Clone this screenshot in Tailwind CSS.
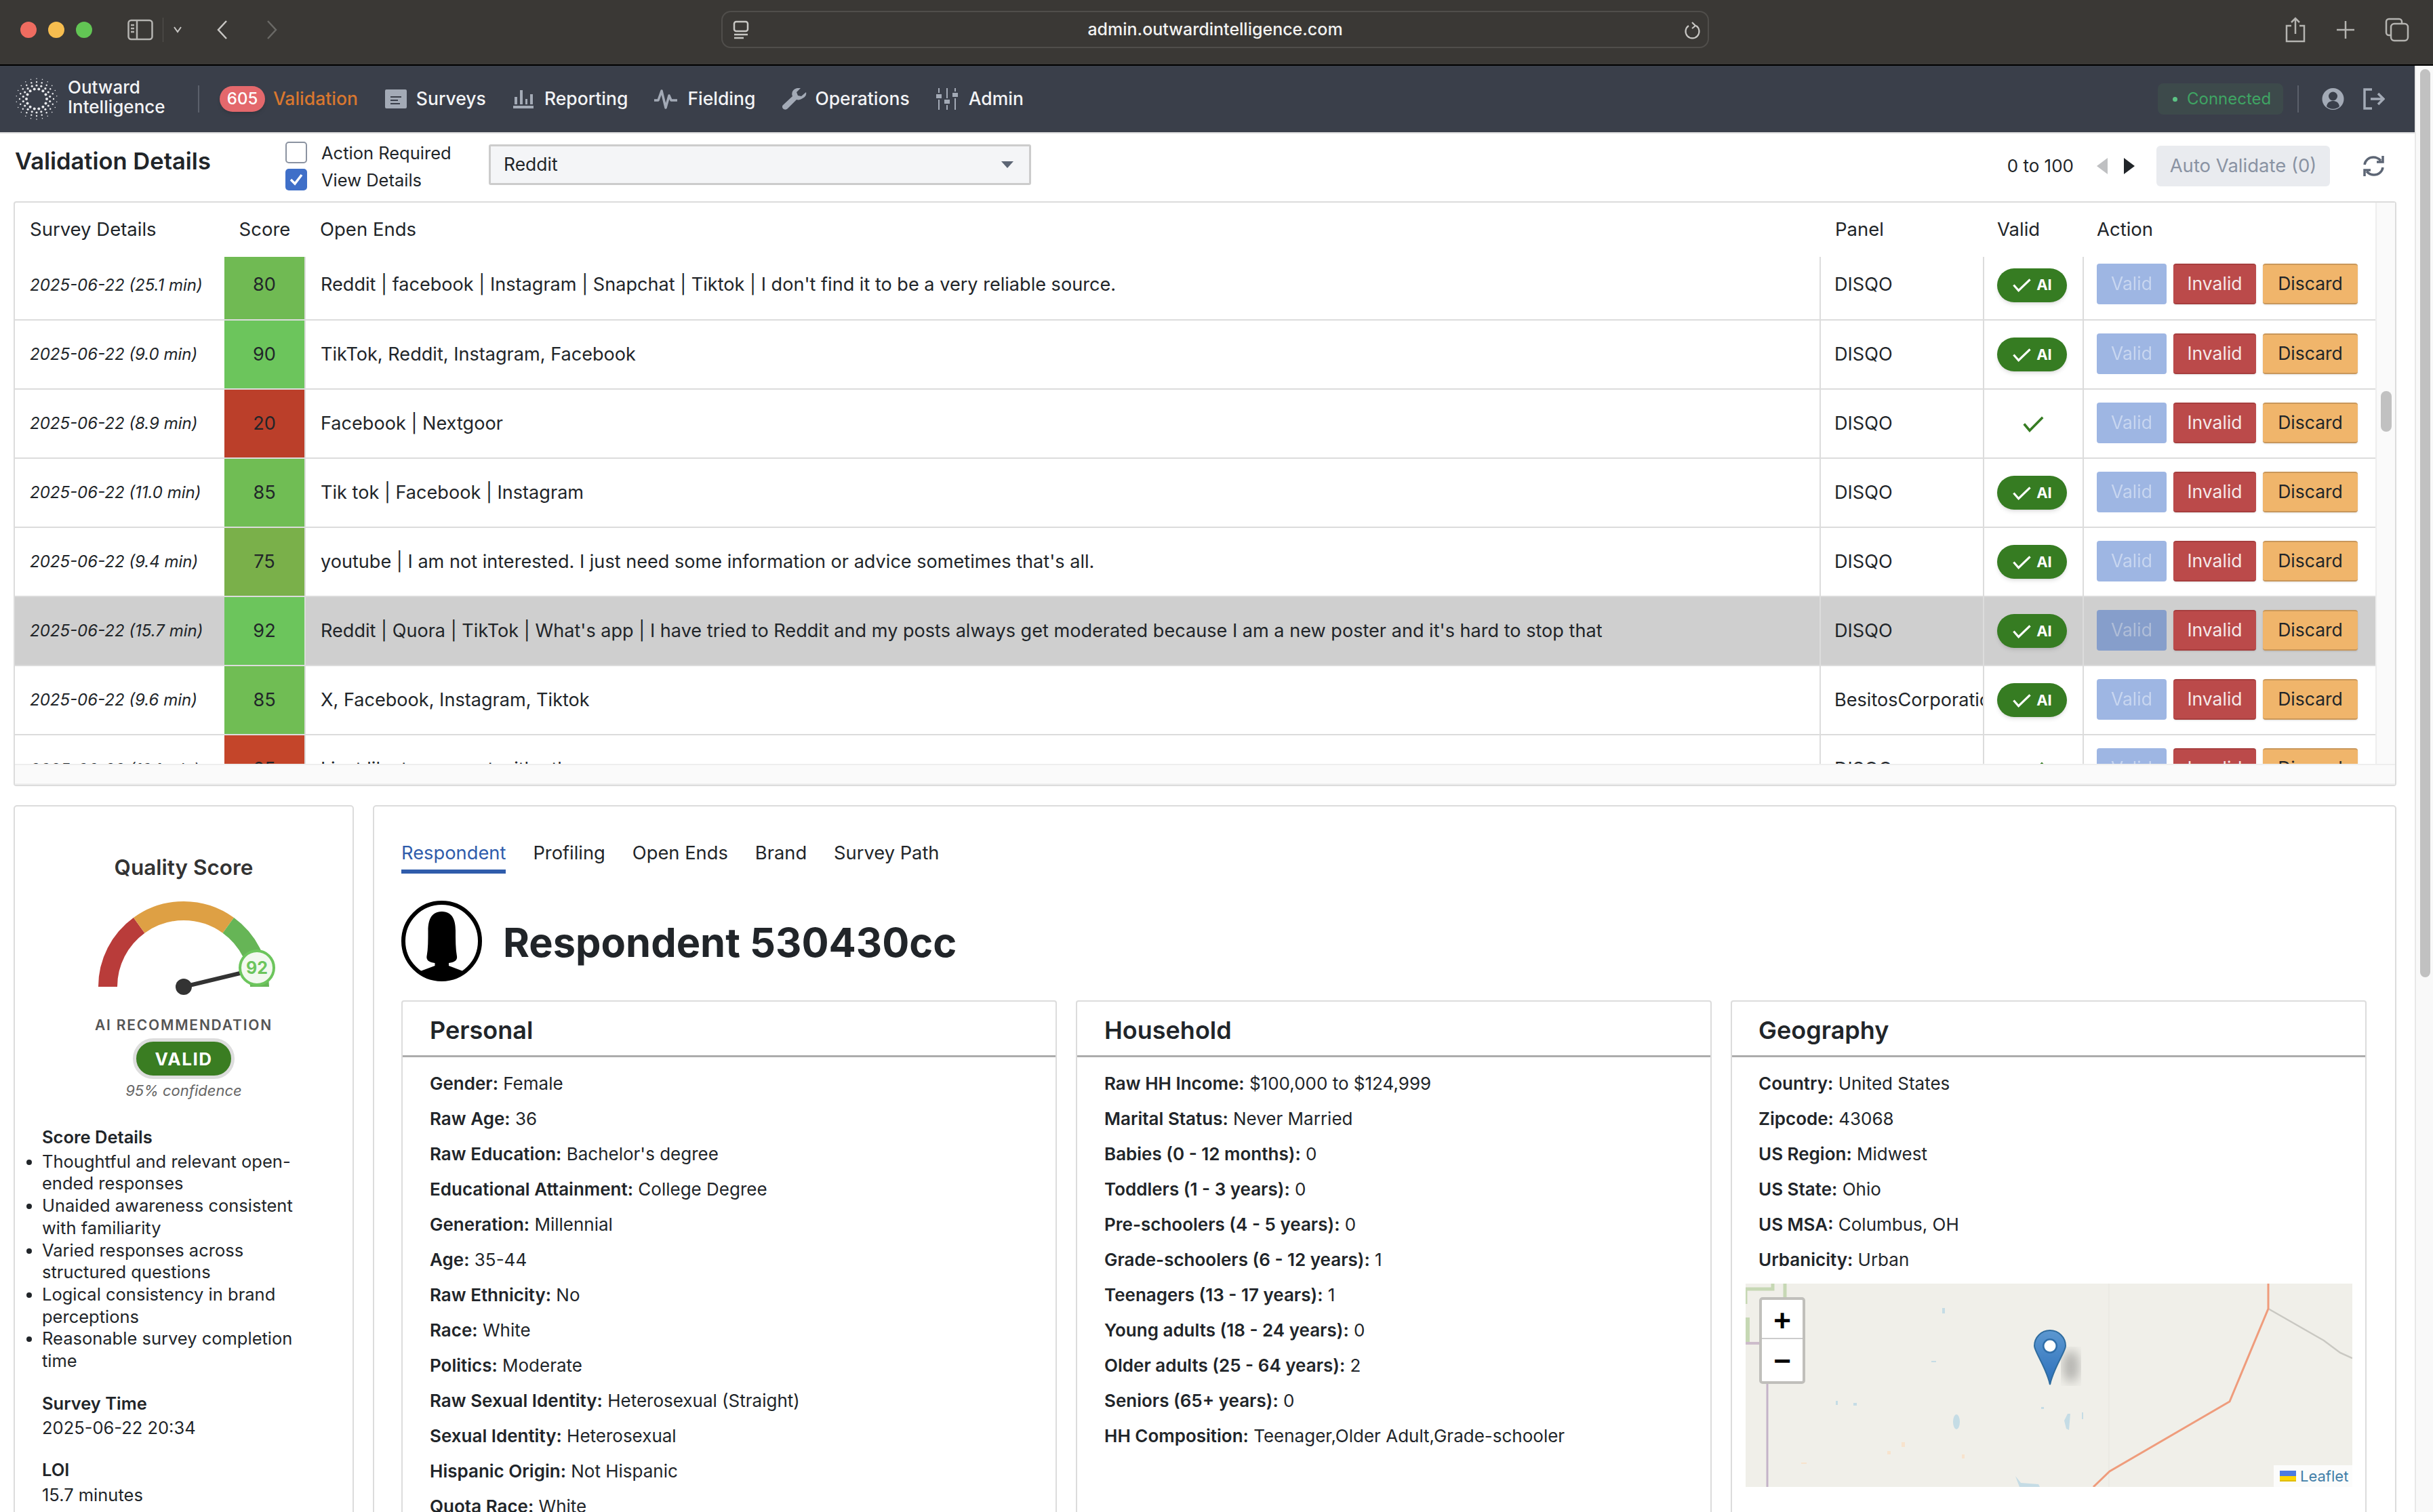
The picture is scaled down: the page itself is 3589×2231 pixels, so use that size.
<!DOCTYPE html>
<html lang="en">
  <head>
    <meta charset="UTF-8" />
    <title>Validation Details</title>
    <script src="https://cdn.jsdelivr.net/npm/@tailwindcss/browser@4"></script>
  </head>
  <body class="font-[Inter,sans-serif] text-[#212529] bg-white">
    <div class="h-[2231px] w-[3589px] overflow-hidden flex flex-col">
      <!-- safari chrome -->
      <div class="h-[97px] shrink-0 bg-[#3a3835] border-b-[2px] border-black relative flex items-center">
        <div class="flex gap-[17px] ml-[30px] mb-[8px]">
          <span class="w-[24px] h-[24px] rounded-full bg-[#ef6c60]"></span>
          <span class="w-[24px] h-[24px] rounded-full bg-[#f6bd4f]"></span>
          <span class="w-[24px] h-[24px] rounded-full bg-[#62c554]"></span>
        </div>
        <svg class="ml-[52px] mb-[8px]" width="38" height="32" viewBox="0 0 38 32" fill="none" stroke="#b5b4b1" stroke-width="2.5"><rect x="1.5" y="2" width="35" height="28" rx="4"/><path d="M14 2v28M5 9h5M5 14h5M5 19h5"/></svg>
        <span class="ml-[14px] mb-[8px] w-[1px] h-[36px] bg-[#55534f]"></span>
        <svg class="ml-[15px] mb-[8px]" width="12" height="10" viewBox="0 0 12 10" fill="none" stroke="#c8c7c4" stroke-width="2"><path d="M1 1l5 7 5-7"/></svg>
        <svg class="ml-[51px] mb-[8px]" width="18" height="30" viewBox="0 0 18 30" fill="none" stroke="#c8c7c4" stroke-width="2.5"><path d="M15 2L3 15l12 13"/></svg>
        <svg class="ml-[55px] mb-[8px]" width="18" height="30" viewBox="0 0 18 30" fill="none" stroke="#6a6966" stroke-width="2.5"><path d="M3 2l12 13L3 28"/></svg>
        <div class="ml-[654px] mb-[8px] w-[1457px] h-[55px] rounded-[14px] border-[2px] border-[#504e4b] flex items-center relative">
          <svg class="absolute left-[14px] top-[12px]" width="26" height="28" viewBox="0 0 26 28" fill="none" stroke="#c8c7c4" stroke-width="2.5"><rect x="3" y="2" width="20" height="14" rx="3"/><path d="M3 21h20M3 26h14"/></svg>
          <span class="w-full text-center text-[25px] font-medium text-[#f2f2f1]">admin.outwardintelligence.com</span>
          <svg class="absolute right-[10px] top-[13px]" width="26" height="30" viewBox="0 0 26 30" fill="none" stroke="#c8c7c4" stroke-width="2.2"><path d="M19 7a10 10 0 1 1-11 0M13 2l5 5-5 4"/></svg>
        </div>
        <svg class="ml-[850px] mb-[8px]" width="30" height="38" viewBox="0 0 30 38" fill="none" stroke="#b5b4b1" stroke-width="2.5"><path d="M9 13H2v23h26V13h-7M15 25V2M9 8l6-6 6 6"/></svg>
        <svg class="ml-[44px] mb-[8px]" width="30" height="30" viewBox="0 0 30 30" fill="none" stroke="#b5b4b1" stroke-width="2.5"><path d="M15 2v26M2 15h26"/></svg>
        <svg class="ml-[43px] mb-[8px]" width="36" height="36" viewBox="0 0 36 36" fill="none" stroke="#b5b4b1" stroke-width="2.5"><rect x="9" y="9" width="25" height="25" rx="5"/><path d="M9 26H6a4 4 0 0 1-4-4V6a4 4 0 0 1 4-4h15a4 4 0 0 1 4 4v3"/></svg>
      </div>

      <div class="flex flex-1 min-h-0">
        <div class="w-[3562px] flex flex-col min-h-0">
          <!-- app nav -->
          <nav class="h-[100px] shrink-0 bg-[#3a3f4a] border-b-[2px] border-[#dcdcdc] flex items-center text-[26.500px] font-medium text-[#f2f3f5]">
            <svg id="logo" class="ml-[21px]" width="66" height="66" viewBox="-33 -33 66 66" fill="#e8e9ec"></svg>
            <div class="ml-[13px] w-[192px] leading-[29px] text-[26px] pb-[6px]">Outward<br />Intelligence</div>
            <span class="w-[2px] h-[40px] bg-[#5b606b]"></span>
            <span class="ml-[30px] w-[67px] h-[38px] rounded-full bg-[#e4686c] text-white text-[24px] flex items-center justify-center shadow-md">605</span>
            <span class="ml-[12px] text-[#d9772f]">Validation</span>
            <svg class="ml-[40px]" width="32" height="28" viewBox="0 0 32 28" fill="#a3aab6"><path fill-rule="evenodd" d="M2 0h28a2 2 0 0 1 2 2v24a2 2 0 0 1-2 2H2a2 2 0 0 1-2-2V2a2 2 0 0 1 2-2zm6 10v2h16v-2H8zm0 5v2h11v-2H8zm0 5v2h14v-2H8z"/></svg>
            <span class="ml-[14px]">Surveys</span>
            <svg class="ml-[39px]" width="32" height="30" viewBox="0 0 32 30" fill="#a3aab6"><path d="M1 25h30v4H1zM3 12h4v11H3zM11 2h4v21h-4zM19 15h3v8h-3zM26 8h4v15h-4z"/></svg>
            <span class="ml-[15px]">Reporting</span>
            <svg class="ml-[39px]" width="34" height="30" viewBox="0 0 34 30" fill="none" stroke="#a3aab6" stroke-width="3.5" stroke-linejoin="round"><path d="M0 17h6l5-14 6 25 5-18 3 7h9"/></svg>
            <span class="ml-[15px]">Fielding</span>
            <svg class="ml-[40px]" width="36" height="32" viewBox="0 0 36 32" fill="#a3aab6"><path d="M35 6l-7 6-5-1-2-5 6-6c-5-1-10 1-12 5-1 3-1 5 0 7L1 25c-2 2-1 5 1 6s4 1 6-1l13-13c3 1 6 0 9-2 4-2 6-5 5-9z"/></svg>
            <span class="ml-[12px]">Operations</span>
            <svg class="ml-[39px]" width="32" height="32" viewBox="0 0 32 32" fill="#a3aab6"><path d="M3 0h2v7H3zM3 17h2v15H3zM0 9h8v6H0zM15 0h2v15h-2zM15 25h2v7h-2zM12 17h8v6h-8zM27 0h2v5h-2zM27 15h2v17h-2zM24 7h8v6h-8z"/></svg>
            <span class="ml-[16px]">Admin</span>
            <div class="ml-auto flex items-center">
              <span class="w-[185px] h-[46px] rounded-[8px] bg-[#3d4a4b] flex items-center text-[#3fa463] text-[24px] font-normal pl-[22px]">
                <span class="w-[7px] h-[7px] rounded-full bg-[#5cc485] mr-[14px]"></span>Connected
              </span>
              <span class="ml-[21px] w-[2px] h-[40px] bg-[#5b606b]"></span>
              <svg class="ml-[34px]" width="33" height="32" viewBox="0 0 33 32"><circle cx="16.5" cy="16" r="16" fill="#a3aab6"/><circle cx="16.5" cy="12" r="6.5" fill="#3a3f4a"/><path d="M7 27c1-6 5-8 9.500-8s8.500 2 9.500 8a14 14 0 0 1-19 0z" fill="#3a3f4a"/></svg>
              <svg class="ml-[28px] mr-[44px]" width="32" height="32" viewBox="0 0 32 32" fill="none" stroke="#a3aab6" stroke-width="3.500"><path d="M13 2H2v28h11M11 16h19M22 8l8 8-8 8"/></svg>
            </div>
          </nav>

          <!-- title row -->
          <div class="h-[100px] shrink-0 flex items-center relative">
            <h1 class="ml-[22px] w-[399px] text-[34.500px] leading-[40px] font-semibold pb-[18px]">Validation Details</h1>
            <div class="flex flex-col gap-[6px] pb-[4px] text-[25.500px] leading-[32px]">
              <label class="flex items-center"><span class="w-[32px] h-[32px] rounded-[5px] border-[2px] border-[#8b93a1] bg-white"></span><span class="ml-[21px] pt-[2px]">Action Required</span></label>
              <label class="flex items-center"><span class="w-[32px] h-[32px] rounded-[5px] bg-[#3f6fc8] flex items-center justify-center"><svg width="20" height="18" viewBox="0 0 20 18" fill="none" stroke="white" stroke-width="3.500"><path d="M2 9l6 6L18 2"/></svg></span><span class="ml-[21px] pt-[2px]">View Details</span></label>
            </div>
            <div class="absolute left-[721px] top-[16px] w-[800px] h-[60px] bg-[#f4f5f7] border-[3px] border-[#cccccc] rounded-[3px] flex items-center pl-[19px] text-[26.500px]">
              Reddit
              <span class="absolute right-[23px] top-[22px] w-0 h-0 border-l-[9px] border-r-[9px] border-t-[10px] border-l-transparent border-r-transparent border-t-[#5d6675]"></span>
            </div>
            <div class="ml-auto flex items-center pb-[4px]">
              <span class="text-[26px] pb-[2px]">0 to 100</span>
              <span class="ml-[34px] w-0 h-0 border-y-[12px] border-r-[16px] border-y-transparent border-r-[#bfc0c2]"></span>
              <span class="ml-[24px] w-0 h-0 border-y-[12px] border-l-[16px] border-y-transparent border-l-[#212529]"></span>
              <button class="ml-[32px] w-[256px] h-[60px] rounded-[6px] bg-[#e9ebef] text-[#8a93a3] text-[27.500px]">Auto Validate (0)</button>
              <svg class="ml-[48px] mr-[44px]" width="33" height="32" viewBox="0 0 33 32" fill="none" stroke="#5d6675" stroke-width="3.500"><path d="M3 14C4 7 10 3 16 3c5 0 8 2 11 5M30 1v9h-9M30 18c-1 7-7 11-13 11-5 0-8-2-11-5M3 31v-9h9"/></svg>
            </div>
          </div>

          <!-- validation table -->
          <div class="ml-[20px] w-[3515px] h-[863px] shrink-0 border-[2px] border-[#dcdcdc] rounded-[4px] flex flex-col">
            <div class="flex h-[828px] shrink-0">
              <div class="w-[3482px] overflow-hidden">
                <table class="table-fixed w-[3482px] border-collapse text-[27.100px]">
                  <colgroup>
                    <col class="w-[309px]" /><col class="w-[119px]" /><col class="w-[2235px]" /><col class="w-[241px]" /><col class="w-[147px]" /><col class="w-[431px]" />
                  </colgroup>
                  <thead>
                    <tr class="h-[80px] text-left text-[27.500px]">
                      <th class="font-normal pl-[22px]">Survey Details</th>
                      <th class="font-normal text-center">Score</th>
                      <th class="font-normal pl-[22px]">Open Ends</th>
                      <th class="font-normal pl-[22px]">Panel</th>
                      <th class="font-normal pl-[20px]">Valid</th>
                      <th class="font-normal pl-[20px]">Action</th>
                    </tr>
                  </thead>
                  <tbody id="rows"></tbody>
                </table>
              </div>
              <div class="flex-1 bg-[#fafafa] border-l-[2px] border-[#eeeeee] relative">
                <div class="absolute left-[6px] top-[278px] w-[16px] h-[60px] rounded-full bg-[#c1c1c1]"></div>
              </div>
            </div>
            <div class="flex-1 bg-[#fafafa] border-y-[2px] border-[#eeeeee]"></div>
          </div>

          <!-- lower panels -->
          <div class="flex gap-[28px] ml-[20px] mt-[28px] items-start">
            <div class="w-[502px] h-[1100px] shrink-0 border-[2px] border-[#dcdcdc] rounded-[5px] flex flex-col items-center">
              <div class="mt-[70px] text-[31.500px] leading-[40px] font-semibold text-[#333333]">Quality Score</div>
              <svg class="mt-[24px]" width="300" height="150" viewBox="0 0 300 150" fill="none">
                <path d="M38 132A112 112 0 0 1 84.200 41.400" stroke="#b93c3a" stroke-width="28" />
                <path d="M84.200 41.400A112 112 0 0 1 215.800 41.400" stroke="#dea044" stroke-width="28" />
                <path d="M215.800 41.400A112 112 0 0 1 262 132" stroke="#66b556" stroke-width="28" />
                <path d="M150 132L258 106" stroke="#333333" stroke-width="6" />
                <circle cx="150" cy="132" r="12" fill="#333333" />
                <circle cx="258" cy="104" r="25" fill="#f2f9ef" stroke="#6cc55c" stroke-width="4" />
                <text x="258" y="113" text-anchor="middle" font-size="25" font-weight="700" fill="#6cc55c">92</text>
              </svg>
              <div class="mt-[25px] text-[21px] leading-[28px] tracking-[1.800px] font-semibold text-[#555555]">AI RECOMMENDATION</div>
              <div class="mt-[5px] w-[150px] h-[60px] rounded-full bg-[#3a7d22] border-[5px] border-[#dddddd] flex items-center justify-center text-white text-[26px] font-bold tracking-[1.500px]">VALID</div>
              <div class="mt-[3px] text-[22px] leading-[28px] italic text-[#666666]">95% confidence</div>
              <div class="mt-[39px] w-full pl-[40px] pr-[20px] text-[25.500px] leading-[32.700px]">
                <div class="font-semibold">Score Details</div>
                <ul class="list-disc pl-[2px] ml-[-2px] mt-[3px] w-[390px]">
                  <li>Thoughtful and relevant open-ended responses</li>
                  <li>Unaided awareness consistent with familiarity</li>
                  <li>Varied responses across structured questions</li>
                  <li>Logical consistency in brand perceptions</li>
                  <li>Reasonable survey completion time</li>
                </ul>
                <div class="mt-[30px] font-semibold">Survey Time</div>
                <div class="mt-[4px]">2025-06-22 20:34</div>
                <div class="mt-[29px] font-semibold">LOI</div>
                <div class="mt-[4px]">15.7 minutes</div>
              </div>
            </div>

            <div class="w-[2985px] h-[1100px] shrink-0 border-[2px] border-[#dcdcdc] rounded-[5px] pl-[40px]">
              <div class="mt-[50px] flex text-[27.300px] leading-[38px] gap-[40px]">
                <span class="text-[#2f5cab] border-b-[6px] border-[#2f5cab] pb-[5px]">Respondent</span>
                <span>Profiling</span>
                <span>Open Ends</span>
                <span>Brand</span>
                <span>Survey Path</span>
              </div>
              <div class="mt-[40px] flex items-center">
                <svg width="119" height="119" viewBox="0 0 119 119"><defs><clipPath id="face"><circle cx="59.500" cy="59.500" r="55" /></clipPath></defs><circle cx="59.500" cy="59.500" r="56.500" fill="white" stroke="black" stroke-width="6" /><g clip-path="url(#face)"><path d="M59.500 16c-16 0-20 14-20 28 0 14 0 27-2 38-1 6 4 9 12 10v4L20 107l8 12h63l8-12-29-11v-4c8-1 13-4 12-10-2-11-2-24-2-38 0-14-4-28-20-28z" fill="black" /></g></svg>
                <h2 class="ml-[31px] text-[59.500px] leading-[70px] font-bold mt-[3px]">Respondent 530430cc</h2>
              </div>
              <div class="mt-[28px] grid grid-cols-[967px_938px_938px] gap-[28px] items-start">
                <div class="h-[800px] border-[2px] border-[#dcdcdc] rounded-[4px]">
                  <div class="h-[82px] border-b-[3px] border-[#acacac] pl-[40px] text-[36px] leading-[84px] font-semibold">Personal</div>
                  <div id="personal" class="pl-[40px] pt-[13px] text-[26px] leading-[52px]"></div>
                </div>
                <div class="h-[800px] border-[2px] border-[#dcdcdc] rounded-[4px]">
                  <div class="h-[82px] border-b-[3px] border-[#acacac] pl-[40px] text-[36px] leading-[84px] font-semibold">Household</div>
                  <div id="household" class="pl-[40px] pt-[13px] text-[26px] leading-[52px]"></div>
                </div>
                <div class="h-[800px] border-[2px] border-[#dcdcdc] rounded-[4px]">
                  <div class="h-[82px] border-b-[3px] border-[#acacac] pl-[39px] text-[36px] leading-[84px] font-semibold">Geography</div>
                  <div id="geography" class="pl-[39px] pt-[13px] text-[26px] leading-[52px]"></div>
                  <div class="relative ml-[20px] mt-[9px] w-[895px] h-[300px] bg-[#f0efe9] overflow-hidden">
                    <svg class="absolute inset-0" width="895" height="300" viewBox="0 0 895 300" fill="none">
                      <defs><linearGradient id="pin" x1="0" y1="0" x2="0" y2="1"><stop offset="0" stop-color="#5c97d0" /><stop offset="1" stop-color="#2b70bb" /></linearGradient><filter id="blur"><feGaussianBlur stdDeviation="8" /></filter></defs>
                      <path d="M536 0v300" stroke="#e6e5df" stroke-width="1" />
                      <path d="M0 30V8h40v-8M58 0v30" stroke="#c6d8b4" stroke-width="5" />
                      <path d="M3 50v38" stroke="#c6d8b4" stroke-width="6" />
                      <path d="M0 88h20" stroke="#cdbccb" stroke-width="4" />
                      <path d="M32 148v152" stroke="#c4b3c8" stroke-width="3" />
                      <path d="M771 37l82 47 24 18 18 8" stroke="#c9c8c2" stroke-width="2.500" />
                      <path d="M771 0v37l-57 137-177 103-24 23" stroke="#ef9c7c" stroke-width="3" />
                      <path d="M290 36h4v8h-4zM274 114h7v2h-7zM133 173h3v6h-3zM159 176h5v4h-5zM436 182h4v3h-4zM475 192l4 0-2 24-4-2-3-12zM496 190h2v10h-2zM398 284l8 10 26 2 2 4h-30z" fill="#c5dce5" />
                      <ellipse cx="311" cy="204" rx="5" ry="11" fill="#c5dce5" />
                      <path d="M230 234h5v7h-5zM209 247h5v5h-5zM319 252h4v6h-4zM82 264h8v2h-8z" fill="#f8e3cd" />
                      <ellipse cx="480" cy="122" rx="12" ry="24" fill="#444444" opacity="0.35" filter="url(#blur)" />
                      <path d="M449 149C444 125 426 100 426 92a23 23 0 0 1 46 0C472 100 454 125 449 149z" fill="url(#pin)" stroke="#2f6c9f" stroke-width="2" />
                      <circle cx="449" cy="92" r="11" fill="#2f6ea9" /><circle cx="449" cy="92" r="8.500" fill="white" />
                    </svg>
                    <div class="absolute left-[20px] top-[20px] w-[68px] rounded-[5px] border-[4px] border-[#c0bfbb] bg-white text-black font-bold font-['Liberation_Sans'] text-[44px] text-center">
                      <div class="h-[58px] leading-[62px] border-b-[2px] border-[#cccccc]">+</div>
                      <div class="h-[62px] leading-[64px]">&minus;</div>
                    </div>
                    <div class="absolute right-0 bottom-0 h-[32px] w-[116px] bg-white/80 flex items-center pl-[9px] text-[22px] text-[#3f7ea8]">
                      <svg width="24" height="16" viewBox="0 0 24 16" class="mr-[6px]"><rect width="24" height="8" fill="#4c7be1" /><rect y="8" width="24" height="6" fill="#ffd500" /><rect y="14" width="24" height="2" fill="#e0bc00" /></svg>Leaflet
                    </div>
                  </div>
                </div>
              </div>
            </div>
          </div>
        </div>
        <!-- page scrollbar -->
        <div class="w-[27px] bg-[#f9f9f9] border-l-[2px] border-[#e8e8e8] pt-[5px] pl-[6px]">
          <div class="w-[15px] h-[1340px] rounded-full bg-[#c1c1c1]"></div>
        </div>
      </div>
    </div>

    <script>
      const data = [
        ["2025-06-22 (25.1 min)", 80, "#70ba53", "Reddit | facebook | Instagram | Snapchat | Tiktok | I don't find it to be a very reliable source.", "DISQO", true],
        ["2025-06-22 (9.0 min)", 90, "#6cc55c", "TikTok, Reddit, Instagram, Facebook", "DISQO", true],
        ["2025-06-22 (8.9 min)", 20, "#bb3f2a", "Facebook | Nextgoor", "DISQO", false],
        ["2025-06-22 (11.0 min)", 85, "#70bd54", "Tik tok | Facebook | Instagram", "DISQO", true],
        ["2025-06-22 (9.4 min)", 75, "#7ab04a", "youtube | I am not interested. I just need some information or advice sometimes that's all.", "DISQO", true],
        ["2025-06-22 (15.7 min)", 92, "#6cc55c", "Reddit | Quora | TikTok | What's app | I have tried to Reddit and my posts always get moderated because I am a new poster and it's hard to stop that", "DISQO", true],
        ["2025-06-22 (9.6 min)", 85, "#70bd54", "X, Facebook, Instagram, Tiktok", "BesitosCorporation", true],
        ["2025-06-22 (19.1 min)", 25, "#c4452a", "I just like to connect with others", "DISQO", false],
      ];
      const check = (w, h, c, sw) => `<svg width="${w}" height="${h}" viewBox="0 0 24 18" preserveAspectRatio="none" fill="none" stroke="${c}" stroke-width="${sw}"><path d="M2 9l6 7L22 2"/></svg>`;
      // first row sits partly under the sticky header, the list is scrolled by 9px
      document.getElementById("rows").innerHTML = data.map((r, i) => `
        <tr class="${i === 0 ? "h-[93px] [&>td]:pb-[9px]" : "h-[102px] border-t-[2px] border-[#dcdcdc]"} ${i === 5 ? "bg-[#cfcfcf]" : ""}">
          <td class="pl-[22px] italic text-[24px] whitespace-nowrap">${r[0]}</td>
          <td class="text-center" style="background:${r[2]}">${r[1]}</td>
          <td class="pl-[22px] border-l-[2px] border-[#dcdcdc] whitespace-nowrap overflow-hidden">${r[3]}</td>
          <td class="pl-[20px] border-l-[2px] border-[#dcdcdc] whitespace-nowrap overflow-hidden">${r[4]}</td>
          <td class="border-l-[2px] border-[#dcdcdc]">
            ${r[5]
              ? `<span class="ml-[19px] w-[103px] h-[50px] rounded-full bg-[#367c22] shadow-md flex items-center justify-center gap-[7px] text-white text-[22px] font-bold">${check(29, 21, "white", 2.6)}AI</span>`
              : `<span class="flex justify-center">${check(33, 25, "#367c22", 2.6)}</span>`}
          </td>
          <td class="pl-[19px] border-l-[2px] border-[#dcdcdc]">
            <div class="flex gap-[10px] pb-[3px] text-[26.500px]">
              <span class="w-[103px] h-[60px] rounded-[4px] bg-[#3f6fc8] text-[#92aee2] opacity-50 flex items-center justify-center">Valid</span>
              <span class="w-[122px] h-[60px] rounded-[4px] bg-[#bb4a4a] border-y-[2px] border-[#a63e3e] text-[#f6e9e9] shadow-sm flex items-center justify-center">Invalid</span>
              <span class="w-[140px] h-[60px] rounded-[4px] bg-[#f0b56b] border-y-[2px] border-[#c9975a] shadow-sm flex items-center justify-center">Discard</span>
            </div>
          </td>
        </tr>`).join("");

      const fill = (id, items) => {
        document.getElementById(id).innerHTML = items.map(([k, v]) => `<div class="whitespace-nowrap"><span class="font-semibold">${k}:</span> ${v}</div>`).join("");
      };
      fill("personal", [["Gender", "Female"], ["Raw Age", "36"], ["Raw Education", "Bachelor's degree"], ["Educational Attainment", "College Degree"], ["Generation", "Millennial"], ["Age", "35-44"], ["Raw Ethnicity", "No"], ["Race", "White"], ["Politics", "Moderate"], ["Raw Sexual Identity", "Heterosexual (Straight)"], ["Sexual Identity", "Heterosexual"], ["Hispanic Origin", "Not Hispanic"], ["Quota Race", "White"]]);
      fill("household", [["Raw HH Income", "$100,000 to $124,999"], ["Marital Status", "Never Married"], ["Babies (0 - 12 months)", "0"], ["Toddlers (1 - 3 years)", "0"], ["Pre-schoolers (4 - 5 years)", "0"], ["Grade-schoolers (6 - 12 years)", "1"], ["Teenagers (13 - 17 years)", "1"], ["Young adults (18 - 24 years)", "0"], ["Older adults (25 - 64 years)", "2"], ["Seniors (65+ years)", "0"], ["HH Composition", "Teenager,Older Adult,Grade-schooler"]]);
      fill("geography", [["Country", "United States"], ["Zipcode", "43068"], ["US Region", "Midwest"], ["US State", "Ohio"], ["US MSA", "Columbus, OH"], ["Urbanicity", "Urban"]]);

      // logo: rings of dots, smaller toward the outside
      let dots = "";
      [[15, 14, 2], [20, 18, 1.6], [25, 20, 1.2], [30, 22, 0.8]].forEach(([rad, n, size], ring) => {
        for (let i = 0; i < n; i++) {
          const a = ((i + ring / 2) / n) * Math.PI * 2;
          dots += `<circle cx="${(rad * Math.cos(a)).toFixed(1)}" cy="${(rad * Math.sin(a)).toFixed(1)}" r="${size}"/>`;
        }
      });
      document.getElementById("logo").innerHTML = dots;
    </script>
  </body>
</html>
